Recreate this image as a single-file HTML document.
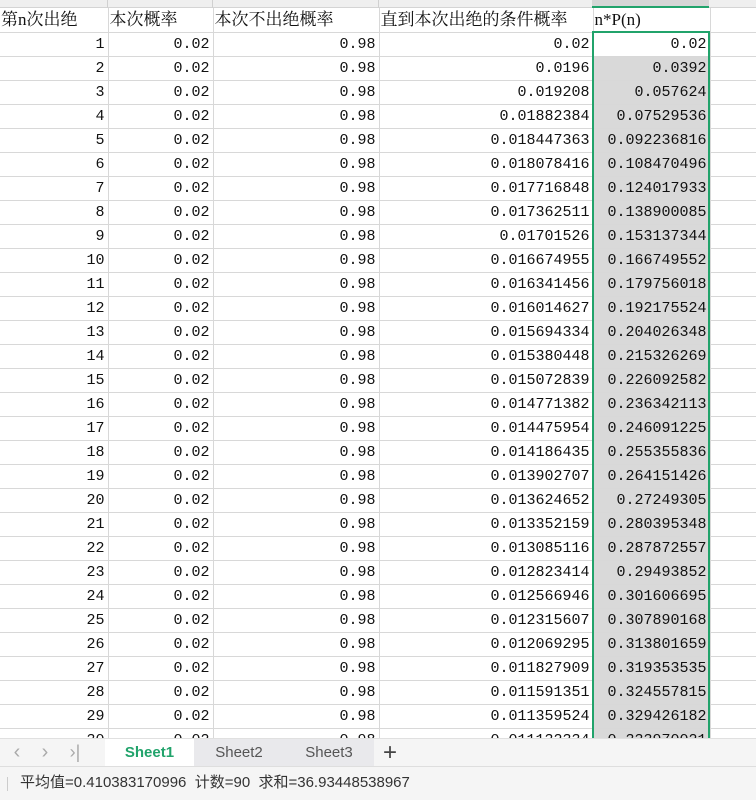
<!DOCTYPE html>
<html><head><meta charset="utf-8"><style>
*{margin:0;padding:0;box-sizing:border-box}
body{width:756px;height:800px;overflow:hidden;background:#fff;position:relative;font-family:"Liberation Mono",monospace}
.top{position:absolute;left:0;top:0;width:756px;height:8px;background:#efefef;border-bottom:1px solid #d4d4d4}
.top .e{position:absolute;left:592px;top:0;width:117px;height:8px;background:#d6d6d6;border-bottom:2px solid #21a36b}
.top i{position:absolute;top:0;width:1px;height:8px;background:#d0d0d0}
table{position:absolute;left:0;top:8px;border-collapse:collapse;table-layout:fixed}
td{height:24px;border-right:1px solid #d8d8d8;border-bottom:1px solid #d8d8d8;text-align:right;padding:0 3px 0 0;font-size:15px;color:#111;white-space:nowrap;overflow:hidden;line-height:23px}
tr.h td{text-align:left;padding:0 0 0 1px;font-family:"Liberation Serif","Noto Serif CJK SC",serif;font-size:17px}
td:nth-child(5){background:#d9d9d9}
tr.h td:nth-child(5),tr.r1 td:nth-child(5){background:#fff}
td:nth-child(6){border-right:none}
.sel{position:absolute;left:592px;top:31px;width:118px;height:720px;border:2px solid #21a36b;border-bottom:none}
.tabs{position:absolute;left:0;top:738px;width:756px;height:28px;background:#f5f5f5;border-top:1px solid #e0e0e0;font-family:"Liberation Sans",sans-serif}
.tabs span{position:absolute;top:0;height:27px;line-height:27px;font-size:15px;text-align:center}
.status{position:absolute;left:0;top:766px;width:756px;height:34px;background:#f5f5f5;border-top:1px solid #dedede;font-family:"Liberation Sans","Noto Sans CJK SC",sans-serif;font-size:15px;color:#333;line-height:32px;padding-left:20px}
.status:before{content:"";position:absolute;left:7px;top:10px;width:1px;height:14px;background:#ccc}
</style></head><body>
<div class="top"><i style="left:107px"></i><i style="left:212px"></i><i style="left:378px"></i><div class="e"></div></div>
<table>
<colgroup><col style="width:108px"><col style="width:105px"><col style="width:166px"><col style="width:214px"><col style="width:117px"><col style="width:46px"></colgroup>
<tr class="h"><td>第n次出绝</td><td>本次概率</td><td>本次不出绝概率</td><td>直到本次出绝的条件概率</td><td>n*P(n)</td><td></td></tr>
<tr class="r1"><td>1</td><td>0.02</td><td>0.98</td><td>0.02</td><td>0.02</td><td></td></tr>
<tr><td>2</td><td>0.02</td><td>0.98</td><td>0.0196</td><td>0.0392</td><td></td></tr>
<tr><td>3</td><td>0.02</td><td>0.98</td><td>0.019208</td><td>0.057624</td><td></td></tr>
<tr><td>4</td><td>0.02</td><td>0.98</td><td>0.01882384</td><td>0.07529536</td><td></td></tr>
<tr><td>5</td><td>0.02</td><td>0.98</td><td>0.018447363</td><td>0.092236816</td><td></td></tr>
<tr><td>6</td><td>0.02</td><td>0.98</td><td>0.018078416</td><td>0.108470496</td><td></td></tr>
<tr><td>7</td><td>0.02</td><td>0.98</td><td>0.017716848</td><td>0.124017933</td><td></td></tr>
<tr><td>8</td><td>0.02</td><td>0.98</td><td>0.017362511</td><td>0.138900085</td><td></td></tr>
<tr><td>9</td><td>0.02</td><td>0.98</td><td>0.01701526</td><td>0.153137344</td><td></td></tr>
<tr><td>10</td><td>0.02</td><td>0.98</td><td>0.016674955</td><td>0.166749552</td><td></td></tr>
<tr><td>11</td><td>0.02</td><td>0.98</td><td>0.016341456</td><td>0.179756018</td><td></td></tr>
<tr><td>12</td><td>0.02</td><td>0.98</td><td>0.016014627</td><td>0.192175524</td><td></td></tr>
<tr><td>13</td><td>0.02</td><td>0.98</td><td>0.015694334</td><td>0.204026348</td><td></td></tr>
<tr><td>14</td><td>0.02</td><td>0.98</td><td>0.015380448</td><td>0.215326269</td><td></td></tr>
<tr><td>15</td><td>0.02</td><td>0.98</td><td>0.015072839</td><td>0.226092582</td><td></td></tr>
<tr><td>16</td><td>0.02</td><td>0.98</td><td>0.014771382</td><td>0.236342113</td><td></td></tr>
<tr><td>17</td><td>0.02</td><td>0.98</td><td>0.014475954</td><td>0.246091225</td><td></td></tr>
<tr><td>18</td><td>0.02</td><td>0.98</td><td>0.014186435</td><td>0.255355836</td><td></td></tr>
<tr><td>19</td><td>0.02</td><td>0.98</td><td>0.013902707</td><td>0.264151426</td><td></td></tr>
<tr><td>20</td><td>0.02</td><td>0.98</td><td>0.013624652</td><td>0.27249305</td><td></td></tr>
<tr><td>21</td><td>0.02</td><td>0.98</td><td>0.013352159</td><td>0.280395348</td><td></td></tr>
<tr><td>22</td><td>0.02</td><td>0.98</td><td>0.013085116</td><td>0.287872557</td><td></td></tr>
<tr><td>23</td><td>0.02</td><td>0.98</td><td>0.012823414</td><td>0.29493852</td><td></td></tr>
<tr><td>24</td><td>0.02</td><td>0.98</td><td>0.012566946</td><td>0.301606695</td><td></td></tr>
<tr><td>25</td><td>0.02</td><td>0.98</td><td>0.012315607</td><td>0.307890168</td><td></td></tr>
<tr><td>26</td><td>0.02</td><td>0.98</td><td>0.012069295</td><td>0.313801659</td><td></td></tr>
<tr><td>27</td><td>0.02</td><td>0.98</td><td>0.011827909</td><td>0.319353535</td><td></td></tr>
<tr><td>28</td><td>0.02</td><td>0.98</td><td>0.011591351</td><td>0.324557815</td><td></td></tr>
<tr><td>29</td><td>0.02</td><td>0.98</td><td>0.011359524</td><td>0.329426182</td><td></td></tr>
<tr><td>30</td><td>0.02</td><td>0.98</td><td>0.011132334</td><td>0.333970021</td><td></td></tr>
</table>
<div class="sel"></div>
<div class="tabs">
<span style="left:4px;width:26px;color:#aaa;font-size:20px">&#8249;</span>
<span style="left:32px;width:26px;color:#aaa;font-size:20px">&#8250;</span>
<span style="left:64px;width:22px;color:#aaa;font-size:18px">&#8250;|</span>
<span style="left:105px;width:89px;background:#fff;color:#21a36b;font-weight:bold">Sheet1</span>
<span style="left:194px;width:90px;background:#e9e9ec;color:#555">Sheet2</span>
<span style="left:284px;width:90px;background:#e9e9ec;color:#555">Sheet3</span>
<span style="left:378px;width:24px;color:#444;font-size:24px;font-weight:300">+</span>
</div>
<div class="status">平均值=0.410383170996&nbsp; 计数=90&nbsp; 求和=36.93448538967</div>
</body></html>
